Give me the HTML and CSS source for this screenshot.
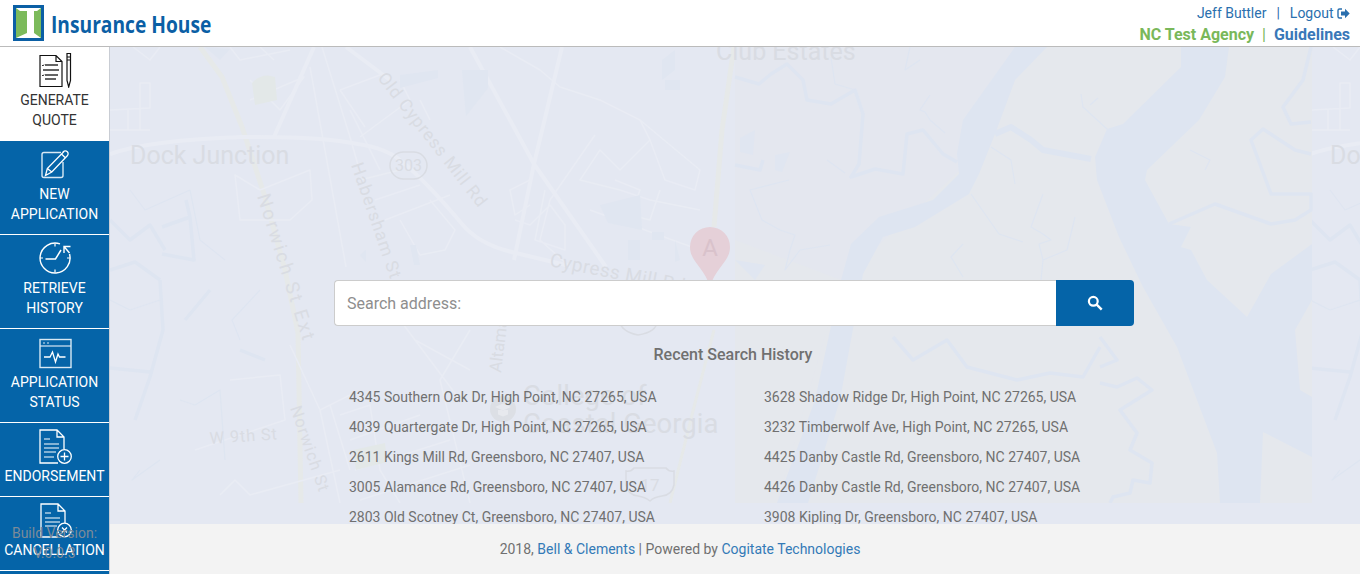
FILE: index.html
```html
<!DOCTYPE html>
<html lang="en">
<head>
  <meta charset="UTF-8">
  <title>Insurance House</title>
  <link rel="stylesheet" href="styles.css">
</head>
<body>
  <!-- top bar -->
  <header class="topbar">
    <a class="brand" href="#">
      <svg class="brand-mark" width="31" height="36" viewBox="0 0 31 36">
        <rect width="31" height="36" fill="#0b5fa5"/>
        <rect x="3" y="3" width="25" height="30" fill="#7cba5b"/>
        <polygon points="3,3 28,3 24,6 21,6 21,28 28,33 3,33 14,28 14,6 7,6" fill="#fff"/>
      </svg>
      <span class="brand-name">Insurance House</span>
    </a>
    <div class="account">
      <div class="account-user">
        <a href="#">Jeff Buttler</a><span class="sep">|</span><a href="#">Logout</a>
        <svg class="logout-icon" width="13" height="11" viewBox="0 0 13 11">
          <path d="M5 1H2.500A1.500 1.500 0 0 0 1 2.500v6A1.500 1.500 0 0 0 2.500 10H5" fill="none" stroke="currentColor" stroke-width="1.400"/>
          <path d="M4 3.500h4V.8l4.700 4.700L8 10.200V7.500H4z" fill="currentColor"/>
        </svg>
      </div>
      <div class="account-agency">
        <span class="agency">NC Test Agency</span><span class="sep">|</span><a href="#">Guidelines</a>
      </div>
    </div>
  </header>

  <div class="layout">
    <!-- left menu -->
    <nav class="sidenav">
      <a class="nav-item nav-item-active" href="#">
        <svg class="nav-icon" viewBox="0 0 36 36">
          <path d="M3 3.500h16l6 6v25H3z M19 3.500v6h6" fill="none" stroke="#111" stroke-width="1.200"/>
          <path d="M8 13h13M6 18h16M8 23h13M8 27h11" fill="none" stroke="#333" stroke-width="1.300"/>
          <path d="M5 13l1 1 1-1.500M5 23l1 1 1-1.500" fill="none" stroke="#333"/>
          <path d="M30 1.500h3.500v27L31.700 35 30 28.500z M30 5h3.500 M30 8h3.500" fill="none" stroke="#111" stroke-width="1.200"/>
        </svg>
        <span>GENERATE<br>QUOTE</span>
      </a>
      <a class="nav-item" href="#">
        <svg class="nav-icon" viewBox="0 0 36 36">
          <path d="M26 16v13.500a2 2 0 0 1-2 2H7a2 2 0 0 1-2-2V8.500a2 2 0 0 1 2-2h17" fill="none" stroke="#d8e8f4" stroke-width="1.400"/>
          <path d="M8.500 29.500l1.800-7L26.500 6l-.2-.2a2.800 2.800 0 0 1 4 4L14.800 26zM10.300 22.500l4.500 3.500M24.500 8l4 4" fill="none" stroke="#fff" stroke-width="1.300"/>
        </svg>
        <span>NEW<br>APPLICATION</span>
      </a>
      <a class="nav-item" href="#">
        <svg class="nav-icon" viewBox="0 0 36 36">
          <path d="M23 3.900A15 15 0 1 0 32.500 14" fill="none" stroke="#fff" stroke-width="1.400"/>
          <path d="M8.500 19h10l5.500-9" fill="none" stroke="#fff" stroke-width="1.500"/>
          <path d="M27 13V6.500h6.500M27 6.500l5.500 6.500" fill="none" stroke="#fff" stroke-width="1.400"/>
          <path d="M18 3.500v3M18 29.500v3M3 18h3M30 18h3" fill="none" stroke="#fff" stroke-width="1.200"/>
        </svg>
        <span>RETRIEVE<br>HISTORY</span>
      </a>
      <a class="nav-item" href="#">
        <svg class="nav-icon" viewBox="0 0 36 36">
          <rect x="3" y="5.500" width="31" height="28" fill="none" stroke="#d8e8f4" stroke-width="1.400"/>
          <path d="M3 12h31" stroke="#d8e8f4" stroke-width="1.200"/>
          <path d="M6 9h2M10 9h2" stroke="#d8e8f4"/>
          <path d="M7 23h6l2.500-5 3 10 2.500-8 1.500 3h6" fill="none" stroke="#fff" stroke-width="1.300"/>
        </svg>
        <span>APPLICATION<br>STATUS</span>
      </a>
      <a class="nav-item" href="#">
        <svg class="nav-icon" viewBox="0 0 36 36">
          <path d="M21 35H3V2h17l7 7v12M20 2v7h7" fill="none" stroke="#fff" stroke-width="1.300"/>
          <path d="M7 11h6M7 16h15M7 20h15M7 24h12M7 29h10" stroke="#fff" stroke-width="1.200"/>
          <circle cx="27.500" cy="28.500" r="6.800" fill="#0564a8" stroke="#fff" stroke-width="1.300"/>
          <path d="M27.500 24.500v8M23.500 28.500h8" stroke="#fff" stroke-width="1.300"/>
        </svg>
        <span>ENDORSEMENT</span>
      </a>
      <a class="nav-item" href="#">
        <svg class="nav-icon" viewBox="0 0 36 36">
          <path d="M21 35H4V2h17l7 7v12M21 2v7h7" fill="none" stroke="#fff" stroke-width="1.300"/>
          <path d="M8 11h6M8 16h15M8 20h15M8 24h12" stroke="#fff" stroke-width="1.200"/>
          <circle cx="27.500" cy="28" r="6.800" fill="#0564a8" stroke="#fff" stroke-width="1.300"/>
          <path d="M25 25.500l5 5M30 25.500l-5 5" stroke="#fff" stroke-width="1.300"/>
        </svg>
        <span>CANCELLATION</span>
      </a>
      <div class="build-info">Build Version:<br>V.0.0.3</div>
    </nav>

    <div class="content">
      <main class="map-area">
        <!-- faded map behind the search -->
        <svg class="map" viewBox="110 47 1250 456" width="1250" height="456">
          <defs>
            <g id="mapWest">
              <path class="road-hw" d="M200 47 L222 77 L242 127 L264 194 L285 270 L298 333 L301 503"/>
              <path class="road-lg" d="M110 154 Q150 140 242 137 Q320 136 358 144 Q385 148 400 160 Q425 180 462 224 Q480 246 520 254 L570 266"/>
              <path class="road-lg" d="M470 47 L534 164 L606 267M562 47 L534 164 L514 260M314 47 L274 137M346 47 L390 80"/>
              <path class="road" d="M322 47 L350 137 L358 165M310 67 L346 267M260 47 L274 60M133 47 L150 60 L160 47M110 110 L150 108 L150 83 L140 83 L140 130M128 110 L128 130M110 130 L150 130M230 47 L240 60 L290 50M250 80 L280 110 L304 77L250 100M340 90 L380 75M340 90 L365 127M350 110 L380 170M400 80 L410 100L360 137M420 100 L430 120M260 190 L310 170 L312 200 L290 220 L240 220 L235 175 L260 190M360 180 L400 170M375 200 L420 185M385 220 L450 195M430 200 L455 230 L445 250 L420 255L400 220"/>
              <path class="road" d="M500 47 L540 70 L560 87 L600 100 L640 120 L650 140 L620 170 L600 150 L580 180 L620 190 L650 200 L700 210M640 120 L700 170 L695 190 L665 180L650 140M615 180 L640 190 L630 215 L650 220 L660 190M590 210 L700 250M595 135 L550 200 L540 240L570 267M530 180 L510 190 L515 215 L530 205M515 220 L530 225L550 205 L565 225 L565 250 L535 240L545 190"/>
              <path class="road" d="M290 345 L320 410 L340 503M350 395 L320 410M330 405 L350 470M340 415 L370 405 L380 470L400 503M350 440 L420 415M355 470 L450 440M360 500 L470 465M415 340 L470 370M470 330 L440 380L470 503M230 380 L280 375 L285 420L195 450M220 495 L235 480 L250 495L340 470M400 320 L460 400"/>
              <path class="water-faint" d="M205 47 L230 49 L220 60Z"/>
              <path class="water-faint" d="M400 75 L438 70 L438 78 L400 88Z"/>
              <path class="water-faint" d="M462 70 L488 70 L488 88 L466 116Z"/>
              <path class="water-faint" d="M600 205 L640 195 L642 230 L608 223Z"/>
              <path class="water-faint" d="M662 60 L675 50 L675 70 L662 80ZM665 80 L680 80 L680 90 L665 90Z"/>
              <path class="water-faint" d="M628 240 L640 240 L640 260 L628 260ZM652 232 L664 232 L664 240 L652 240ZM675 240 L680 260 L675 262Z"/>
              <path class="water-faint" d="M410 245 L416 245 L420 265 L414 265ZM360 255 L366 250 L366 262Z"/>
              <path class="park" d="M252 83 Q262 72 275 77 L277 100 L255 105Z"/>
              <path class="park" d="M353 450 L385 443 L387 462 L356 470Z"/>
              <path class="river" d="M160 280 L163 330 L150 377M110 368 L150 372 M150 377 L135 420 M162 254 L194 260 L190 217 L162 227 M190 217 L186 200 M110 220 L130 240 L150 225 L165 250 M110 270 L135 262 L160 280 M185 320 L210 290 M240 350 L265 360"/>
              <path class="river-sm" d="M110 300 L130 310 L160 300M130 190 L145 210 L190 190 L200 240 L225 260M260 290 L232 320 L240 340M180 400 L195 405 L220 390L225 460M140 470 L132 480 L160 460"/>
              <text class="map-label" x="130" y="164" font-size="25">Dock Junction</text>
            </g>
          </defs>

          <rect class="land-mid" x="735" y="47" width="577" height="456"/>
          <path class="land-grey" d="M735 240 L841 280 L777 503 L735 503Z"/>
          <path class="land-grey" d="M841 280 L777 503 L1312 503 L1312 47 L1015 47 L960 170 Z"/>
          <use href="#mapWest"/>

          <path class="road-hw" d="M734 47 L722 130 L714 227"/>
          <path class="road-hw road-hw-s" d="M714 330 L695 403 L670 503"/>

          <!-- tidal channels -->
          <path class="water" d="M1015 47 L963 120 L957 154 L959 174 L933 200 L879 217 L851 244 L841 280 L815 400 L777 503 L808 503 L840 400 L863 274 L883 237 L915 227 L969 194 L979 174 L995 134 L1015 80 L1047 47Z"/>
          <path class="water" d="M1181 47 L1181 67 L1123 124 L1107 129 L1095 157 L1097 180 L1119 237 L1143 287 L1177 347 L1217 453 L1220 503 L1260 503 L1263 432 L1312 457 L1312 397 L1300 390 L1295 330 L1312 300 L1312 244 L1271 274 L1247 317 L1207 280 L1191 250 L1181 247 L1191 227 L1169 224 L1145 180 L1147 170 L1199 120 L1225 77 L1229 47Z"/>
          <path class="river" d="M735 77 L759 84 L771 74 L787 64 L803 80 L807 100 L831 104 L855 90 L863 114 L859 164 L851 177 L875 169 L903 174 L907 134 L923 130 L943 154 L957 162"/>
          <path class="river-lg" d="M995 134 L1011 127 L1031 140 L1043 150 L1091 159"/>
          <path class="river" d="M1169 224 L1215 204 L1271 224 L1295 220 L1311 210 L1311 194 L1271 194 L1251 140 L1263 129 L1295 150 L1311 154"/>
          <path class="river" d="M1311 47 L1303 80 L1283 107 L1291 124 L1311 122"/>
          <path class="river" d="M1100 383 L1117 387 L1137 378 L1152 390 L1120 410 L1137 433 L1130 450 L1152 463 L1150 483 L1133 480 L1130 493 L1113 497 L1110 503"/>
          <path class="river" d="M893 337 L913 360 L947 340 L967 367 L1017 380 L1050 373 L1083 377 L1100 347"/>
          <path class="river" d="M735 165 L760 170 L763 160 M1100 337 L1117 360 L1100 367"/>
          <path class="river-sm" d="M855 90 L835 84 L831 57M1081 94 L1083 107 L1107 129M1090 105 L1098 98M971 194 L999 234 L1023 242M1075 217 L1067 250 L1043 260 L1041 280M1043 194 L1031 227 L1043 234 L1051 240 L1039 244 L1043 260M963 244 L951 257 L963 277M991 147 L1011 160 L1015 184M827 160 L845 173M910 47 L905 70 L920 60M930 95 L920 110 L925 112 L930 120 L945 133M789 180 L750 190 L762 220 L780 230 L795 235 L790 250 L785 270L800 250 L830 245M1190 150 L1210 160 L1205 170"/>
          <path class="water-faint" d="M740 138 L755 130 L753 155 L740 152ZM775 155 L790 152 L782 172 L775 170ZM735 260 L765 265L755 280Z"/>

          <g clip-path="url(#eastTile)">
            <use href="#mapWest" x="1200"/>
          </g>
          <clipPath id="eastTile"><rect x="1312" y="47" width="60" height="456"/></clipPath>

          <!-- labels -->
          <text class="map-label" x="716" y="60" font-size="25">Club Estates</text>
          <text class="map-label" transform="translate(257 196) rotate(72.500)" font-size="19" letter-spacing="2.200">Norwich St Ext</text>
          <text class="map-label" transform="translate(377 78) rotate(52)" font-size="17.500" letter-spacing=".8">Old Cypress Mill Rd</text>
          <text class="map-label" transform="translate(351 165) rotate(71)" font-size="17.500" letter-spacing=".9">Habersham St</text>
          <text class="map-label" transform="translate(549 266) rotate(11)" font-size="19" letter-spacing=".5">Cypress Mill Rd</text>
          <text class="map-label" transform="translate(501 373) rotate(-83)" font-size="17">Altama Ave</text>
          <text class="map-label" transform="translate(290 408) rotate(71)" font-size="16.500" letter-spacing="1">Norwich St</text>
          <text class="map-label" transform="translate(210 444) rotate(-4)" font-size="16.500" letter-spacing=".8">W 9th St</text>
          <text class="map-label" x="523" y="405" font-size="27.500">College of</text>
          <text class="map-label" x="523" y="433" font-size="27.500">Coastal Georgia</text>
          <circle class="map-badge" cx="503" cy="409" r="13"/>
          <path d="M495 407l8-3.500 8 3.500-8 3.500zM498 410v4.500l5 2 5-2V410" fill="#e7e9ee"/>

          <!-- route shields -->
          <rect class="map-shield" x="390" y="152" width="37" height="27" rx="13.500"/>
          <text class="map-label map-label-mid" x="408.500" y="171" font-size="16">303</text>
          <path class="map-shield" d="M625 305h25q4 4 7 2v14q0 11-19 14q-16-3-19-14v-14q3 2 6-2z"/>
          <path class="map-shield" d="M634 468h32q3 4 8 3v14q-2 10-12 11q-8 1-12 5q-5-4-12-5q-10-1-12-11v-14q5 1 8-3z"/>
          <text class="map-label map-label-mid" x="650" y="491" font-size="17">17</text>

          <!-- marker -->
          <path class="map-pin" d="M710 227a20 20 0 0 1 20 20c0 15-15 21-20 40c-5-19-20-25-20-40a20 20 0 0 1 20-20z"/>
          <text class="map-pin-label" x="710" y="256" font-size="24">A</text>
        </svg>

        <div class="search-panel">
          <form class="search-form">
            <input class="search-input" type="text" placeholder="Search address:">
            <button class="search-btn" type="button" aria-label="Search">
              <svg width="16" height="16" viewBox="0 0 16 16">
                <circle cx="6.300" cy="6.300" r="4.400" fill="none" stroke="#fff" stroke-width="2.200"/>
                <path d="M9.700 9.700l5 5" stroke="#fff" stroke-width="2.400"/>
              </svg>
            </button>
          </form>
          <h2 class="history-title">Recent Search History</h2>
          <ul class="history-list">
            <li>4345 Southern Oak Dr, High Point, NC 27265, USA</li>
            <li>3628 Shadow Ridge Dr, High Point, NC 27265, USA</li>
            <li>4039 Quartergate Dr, High Point, NC 27265, USA</li>
            <li>3232 Timberwolf Ave, High Point, NC 27265, USA</li>
            <li>2611 Kings Mill Rd, Greensboro, NC 27407, USA</li>
            <li>4425 Danby Castle Rd, Greensboro, NC 27407, USA</li>
            <li>3005 Alamance Rd, Greensboro, NC 27407, USA</li>
            <li>4426 Danby Castle Rd, Greensboro, NC 27407, USA</li>
            <li>2803 Old Scotney Ct, Greensboro, NC 27407, USA</li>
            <li>3908 Kipling Dr, Greensboro, NC 27407, USA</li>
          </ul>
        </div>
      </main>

      <footer class="footer">
        2018, <a href="#">Bell &amp; Clements</a> | Powered by <a href="#">Cogitate Technologies</a>
      </footer>
    </div>
  </div>
</body>
</html>
```

FILE: styles.css
```css
html, body {
  margin: 0;
  padding: 0;
  height: 100%;
  overflow: hidden;
}

body {
  display: flex;
  flex-direction: column;
  background: #ffffff;
  color: #707070;
  font-family: Roboto, "Liberation Sans", sans-serif;
  font-size: 14px;
}

a {
  text-decoration: none;
}

/* top bar */
.topbar {
  flex: none;
  display: flex;
  align-items: flex-start;
  justify-content: space-between;
  height: 46px;
  padding: 0 10px 0 13px;
  background: #ffffff;
  border-bottom: 1px solid #bbbbbb;
}

.brand {
  display: flex;
  align-items: center;
  gap: 7px;
  padding-top: 5px;
}

/* logo lettering is condensed, no condensed face installed */
.brand-name {
  display: block;
  width: 160px;
  color: #0b5fa5;
  font-family: "Open Sans", "Liberation Sans", sans-serif;
  font-size: 24px;
  font-weight: 700;
  white-space: nowrap;
  transform: scaleX(0.8);
  transform-origin: left center;
}

.account {
  padding-top: 3px;
  text-align: right;
}

.account-user {
  height: 21px;
  line-height: 20px;
  font-size: 14px;
}

.account-user a {
  color: #2a6fae;
}

.account-user .sep {
  margin: 0 10px;
  color: #2a6fae;
}

.logout-icon {
  color: #2a6fae;
  vertical-align: -1px;
}

.account-agency {
  line-height: 22px;
  font-size: 16px;
  font-weight: 700;
}

.account-agency a {
  color: #3a78b8;
}

.account-agency .sep {
  margin: 0 8px;
  color: #7ab85a;
  font-weight: 400;
}

.agency {
  color: #7ab85a;
}

/* page body */
.layout {
  flex: 1;
  display: flex;
  min-height: 0;
}

/* left menu */
.sidenav {
  position: relative;
  flex: none;
  box-sizing: border-box;
  width: 110px;
  background: #0564a8;
  border-right: 1px solid #c9cdd4;
}

.nav-item {
  display: flex;
  flex-direction: column;
  align-items: center;
  padding: 5px 0 10px;
  border-bottom: 1px solid #ffffff;
  color: #ffffff;
  font-size: 14px;
  line-height: 20px;
  text-align: center;
}

.nav-item-active {
  background: #ffffff;
  color: #333333;
}

.nav-icon {
  display: block;
  width: 36px;
  height: 36px;
  margin-bottom: 2px;
}

.build-info {
  position: absolute;
  left: 0;
  right: 0;
  top: 476px;
  color: #7d8b98;
  font-size: 14px;
  line-height: 20px;
  text-align: center;
}

/* content */
.content {
  flex: 1;
  display: flex;
  flex-direction: column;
  min-width: 0;
}

.map-area {
  position: relative;
  flex: 1;
  min-height: 0;
  overflow: hidden;
  background: #e4e8f2;
}

.map {
  position: absolute;
  top: 0;
  left: 0;
  display: block;
}

.land-mid { fill: #e4e7ef; }
.land-grey { fill: #e5e8ed; }
.water { fill: #dee5f1; }
.water-faint { fill: #e0e6f1; }
.park { fill: #e3e8e8; }
.road, .road-lg, .road-hw, .river, .river-lg, .river-sm {
  fill: none;
  stroke-linejoin: round;
}
.road { stroke: #e9ecf4; stroke-width: 1.5; }
.road-lg { stroke: #e9ecf4; stroke-width: 4; }
.road-hw { stroke: #e6e9e9; stroke-width: 5; }
.road-hw-s { stroke-width: 3; }
.river { stroke: #dee5f1; stroke-width: 3.5; }
.river-lg { stroke: #dee5f1; stroke-width: 6; }
.river-sm { stroke: #dee5f1; stroke-width: 1.2; }

.map-label {
  fill: #d9dce3;
  font-family: Roboto, sans-serif;
}

.map-label-mid {
  text-anchor: middle;
}

.map-badge {
  fill: #dcdfe5;
}

.map-shield {
  fill: none;
  stroke: #d9dce3;
  stroke-width: 1.5;
}

.map-pin {
  fill: #e5d0d8;
}

.map-pin-label {
  fill: #d9c2cb;
  font-family: Roboto, sans-serif;
  text-anchor: middle;
}

/* search */
.search-panel {
  position: relative;
  box-sizing: border-box;
  width: 800px;
  margin-left: 224px;
  padding-top: 233px;
}

.search-form {
  display: flex;
  height: 46px;
}

.search-input {
  flex: 1;
  min-width: 0;
  box-sizing: border-box;
  padding: 0 12px;
  background: #ffffff;
  border: 1px solid #cccccc;
  border-right: none;
  border-radius: 4px 0 0 4px;
  color: #555555;
  font-family: inherit;
  font-size: 16px;
}

.search-input::placeholder {
  color: #8e8e8e;
  opacity: 1;
}

.search-btn {
  flex: none;
  display: flex;
  align-items: center;
  justify-content: center;
  width: 78px;
  padding: 0;
  background: #0564a8;
  border: none;
  border-radius: 0 4px 4px 0;
}

.history-title {
  margin: 19px 2px 17px 0;
  font-size: 16px;
  font-weight: 500;
  line-height: 20px;
  text-align: center;
}

.history-list {
  display: grid;
  grid-template-columns: 415px 1fr;
  grid-auto-rows: 30px;
  margin: 0;
  padding: 0 0 0 15px;
  list-style: none;
  line-height: 30px;
  font-size: 14px;
  white-space: nowrap;
}

/* footer */
.footer {
  flex: none;
  height: 50px;
  padding-right: 110px;
  background: #f3f3f3;
  line-height: 50px;
  text-align: center;
}

.footer a {
  color: #337ab7;
}
```
